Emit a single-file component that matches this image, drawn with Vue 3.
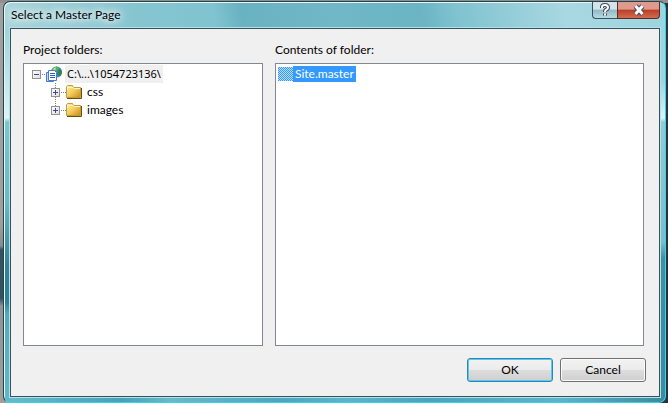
<template>
  <div class="desktop">
    <div class="window" role="dialog" aria-labelledby="dialog-title">
      <header class="title-bar">
        <h1 id="dialog-title">Select a Master Page</h1>
        <div class="caption-buttons">
          <button class="caption help" aria-label="Help">
            <svg width="12" height="16" viewBox="0 0 12 16">
              <path class="glyph-edge" d="M3 6V5Q3 3 6 3Q9 3 9 5.500Q9 7 7.500 7.500Q6 8 6 10M6 11.500V13.500" />
              <path class="glyph" d="M3 6V5Q3 3 6 3Q9 3 9 5.500Q9 7 7.500 7.500Q6 8 6 10M6 11.500V13.500" />
            </svg>
          </button>
          <button class="caption close" aria-label="Close">
            <svg width="14" height="14" viewBox="0 0 14 14">
              <path class="glyph-edge wide" d="M3.500 3L10.500 11M10.500 3L3.500 11" />
              <path class="glyph wide" d="M3.500 3L10.500 11M10.500 3L3.500 11" />
            </svg>
          </button>
        </div>
      </header>

      <main class="client">
        <div class="panes">
          <section class="pane">
            <h2 id="folders-label">Project folders:</h2>
            <div class="list-box" role="tree" aria-labelledby="folders-label">
              <div class="row root" role="treeitem">
                <button class="expander" :aria-label="expanded ? 'Collapse' : 'Expand'" @click="expanded = !expanded">
                  <svg width="9" height="9" viewBox="0 0 9 9">
                    <path d="M2 4.500H7" />
                    <path v-if="!expanded" d="M4.500 2V7" />
                  </svg>
                </button>
                <span class="dots"></span>
                <svg class="site-icon" width="17" height="17" viewBox="0 0 17 17">
                  <circle cx="10.500" cy="6" r="5.500" fill="#3f7fd6" />
                  <path d="M6 3Q8 0.500 11 0.500L13 2L11.500 4.500L9 5.500L7 8L5 7Z" fill="#58b548" />
                  <path d="M13 3L15.500 4.500Q16.500 8 14 10.500L11.500 8.500Z" fill="#2f8a3a" />
                  <path d="M7.500 2.500L10 1.500L9.500 3.500L7.500 4.500Z" fill="#c3eda6" />
                  <path d="M0.500 6.500H7.500V15.500H0.500Z" fill="#c4dafa" stroke="#4a7cc9" />
                  <path d="M2.500 4.500H8.500L10.500 6.500V14.500H2.500Z" fill="#fff" stroke="#4a7cc9" />
                  <path d="M4 7.500H9M4 9.500H9M4 11.500H9" stroke="#2d62c4" />
                </svg>
                <span class="name current">C:\...\1054723136\</span>
              </div>
              <div v-if="expanded" class="children" role="group">
                <div v-for="folder in folders" :key="folder" class="row" role="treeitem">
                  <button class="expander" aria-label="Expand">
                    <svg width="9" height="9" viewBox="0 0 9 9">
                      <path d="M2 4.500H7M4.500 2V7" />
                    </svg>
                  </button>
                  <span class="dots"></span>
                  <svg class="folder-icon" width="16" height="14" viewBox="0 0 16 14">
                    <defs>
                      <linearGradient id="folder-face" x1="0" y1="0" x2="1" y2="1">
                        <stop offset="0" stop-color="#fff0a8" />
                        <stop offset="0.500" stop-color="#f4cb5a" />
                        <stop offset="1" stop-color="#c48a12" />
                      </linearGradient>
                    </defs>
                    <path d="M0.500 12.500V1.500L1.500 0.500H6.500L7.500 2.500H14.500V12.500Z" fill="url(#folder-face)" stroke="#c69b3c" />
                    <path d="M1.500 5V2.500H7L8.500 3.500H14" fill="none" stroke="#fff6c8" />
                    <path d="M15.500 3V13.500H1" fill="none" stroke="#6d4c12" />
                  </svg>
                  <span class="name">{{ folder }}</span>
                </div>
              </div>
            </div>
          </section>

          <section class="pane">
            <h2 id="contents-label">Contents of folder:</h2>
            <div class="list-box" role="listbox" aria-labelledby="contents-label">
              <div
                v-for="file in files"
                :key="file"
                :class="['file', { selected: file === selectedFile }]"
                role="option"
                @click="selectedFile = file"
              >
                <span class="file-icon"></span>
                <span class="file-name">{{ file }}</span>
              </div>
            </div>
          </section>
        </div>

        <footer class="actions">
          <button class="push default">OK</button>
          <button class="push">Cancel</button>
        </footer>
      </main>
    </div>
  </div>
</template>

<script setup>
import { ref } from 'vue'

const expanded = ref(true)
const folders = ['css', 'images']
const files = ['Site.master']
const selectedFile = ref('Site.master')
</script>

<style>
body {
  margin: 0;
}
</style>

<style scoped>
* {
  box-sizing: border-box;
}

.desktop {
  display: flex;
  min-height: 100vh;
  padding: 1px 2px 0 3px;
  background:
    linear-gradient(#8f8f8f, #8f8f8f) top / 100% 3px no-repeat,
    linear-gradient(#26333d, #26333d) right / 9px 100% no-repeat,
    linear-gradient(#a09f9d 55%, #8b8b8b 61%, #34525f 62%, #34525f 74%, #8e9396 76%, #a09f9d);
  font-family: Lato, "Noto Sans", sans-serif;
  font-size: 12px;
  line-height: 16px;
  color: #000;
}

.window {
  flex: 1;
  display: flex;
  flex-direction: column;
  padding: 0 5px 5px 6px;
  border: 1px solid #24434c;
  border-right-color: #35d3ee;
  border-bottom-color: #35d3ee;
  border-radius: 7px;
  box-shadow: inset 1px 1px 0 #e6f8fa;
  background:
    linear-gradient(80deg, #a9d5dc, #86c5d0 20%, #7fc4d0 32%, #69b2c1 36%, #70b8c7 50%, #6ab4c3 63%, #7fc2cf 68%, #a9d8e1 85%, #9bd5df) top / 100% 27px no-repeat,
    linear-gradient(#8fc8d2, #d9f4f6 29%, #79c6d1 30%, #6bb9c6 50%, #338299 66%, #2f8299 75%, #56a9bc 78%, #5fb9ca) left / 7px 100% no-repeat,
    linear-gradient(#9bd5df, #a0d4dc 20%, #dcf4f6 29%, #93cbd4 30%, #7cbdc9 60%, #438fa2 64%, #3c8ba0) right / 7px 100% no-repeat,
    linear-gradient(90deg, #66bccd, #45a3b9 18%, #68b9cc 25%, #4aa7bf 42%, #5cb5ca 52%, #48a5bd 64%, #5cb5ca 84%, #3c8ba0);
}

.title-bar {
  display: flex;
  justify-content: space-between;
  align-items: flex-start;
  height: 26px;
}

h1 {
  margin: 0;
  padding: 5px 1px;
  font-size: 12px;
  font-weight: normal;
  text-shadow: 0 0 6px #fff, 0 0 10px #fff, 0 0 16px #fff;
}

.caption-buttons {
  display: flex;
}

.caption {
  display: flex;
  align-items: center;
  justify-content: center;
  height: 17px;
  padding: 0;
  border: 1px solid #35535d;
  border-top: 0;
}

.help {
  width: 25px;
  border-right: 0;
  border-radius: 0 0 0 4px;
  background: linear-gradient(#d1e5ea 45%, #8fb9c4 50%, #b7dbe3);
}

.close {
  width: 43px;
  border-color: #5b2a27;
  border-radius: 0 0 4px 0;
  background: linear-gradient(#dd9b8d 45%, #bf3c26 50%, #cf6d51);
}

.glyph-edge,
.glyph {
  fill: none;
  stroke: #454b57;
  stroke-width: 4;
}

.glyph {
  stroke: #fff;
  stroke-width: 2;
}

.glyph-edge.wide {
  stroke-width: 5;
}

.glyph.wide {
  stroke-width: 3;
}

.client {
  flex: 1;
  display: flex;
  flex-direction: column;
  padding: 13px 13px 14px 12px;
  border: 1px solid #35535d;
  background: #f0f0f0;
  box-shadow: 0 0 0 1px #b5e0e8;
}

.panes {
  flex: 1;
  display: grid;
  grid-template-columns: 240fr 369fr;
  gap: 12px;
  padding-right: 2px;
}

.pane {
  display: flex;
  flex-direction: column;
  gap: 5px;
}

h2 {
  margin: 0;
  font-size: 12px;
  font-weight: normal;
}

.list-box {
  flex: 1;
  padding: 1px;
  border: 1px solid #828790;
  background: #fff;
}

.row {
  display: flex;
  align-items: center;
  height: 18px;
}

.root {
  padding-left: 7px;
}

.children {
  padding-left: 26px;
  background: repeating-linear-gradient(#808080 0 1px, transparent 1px 2px) 30px 0 / 1px 28px no-repeat;
}

.expander {
  width: 9px;
  height: 9px;
  padding: 0;
  border: 0;
  background: linear-gradient(135deg, #fff, #dcdcdc);
  box-shadow: inset 0 0 0 1px #919191;
}

.expander svg {
  display: block;
}

.expander path {
  stroke: #3a4a8c;
}

.dots {
  width: 6px;
  height: 1px;
  background: repeating-linear-gradient(90deg, transparent 0 1px, #808080 1px 2px);
}

.root .dots {
  width: 5px;
}

.name {
  padding: 0 3px;
  margin-left: 2px;
  line-height: 18px;
}

.current {
  padding: 0 2px;
  background: #f0f0f0;
  font-family: "Noto Sans", sans-serif;
  font-size: 11px;
}

.file {
  display: flex;
  align-items: center;
  height: 18px;
  padding-left: 1px;
}

.file-icon {
  width: 15px;
  height: 14px;
}

.file-name {
  padding: 0 2px;
}

.selected .file-icon {
  background: repeating-conic-gradient(#3399ff 0 25%, #b9dcff 0 50%) 0 0 / 2px 2px;
}

.selected .file-name {
  background: #3399ff;
  color: #fff;
}

.actions {
  display: flex;
  justify-content: flex-end;
  gap: 7px;
  padding-top: 12px;
}

.push {
  width: 86px;
  height: 24px;
  padding: 0;
  border: 1px solid #707070;
  border-radius: 3px;
  background: linear-gradient(#f2f2f2, #ebebeb 50%, #dddddd 50%, #cfcfcf);
  box-shadow: inset 0 0 0 1px #fbfbfb;
  color: #000;
  font: inherit;
}

.default {
  border-color: #3c7fb1;
  box-shadow: inset 0 0 0 1px #48d0f5;
}
</style>
